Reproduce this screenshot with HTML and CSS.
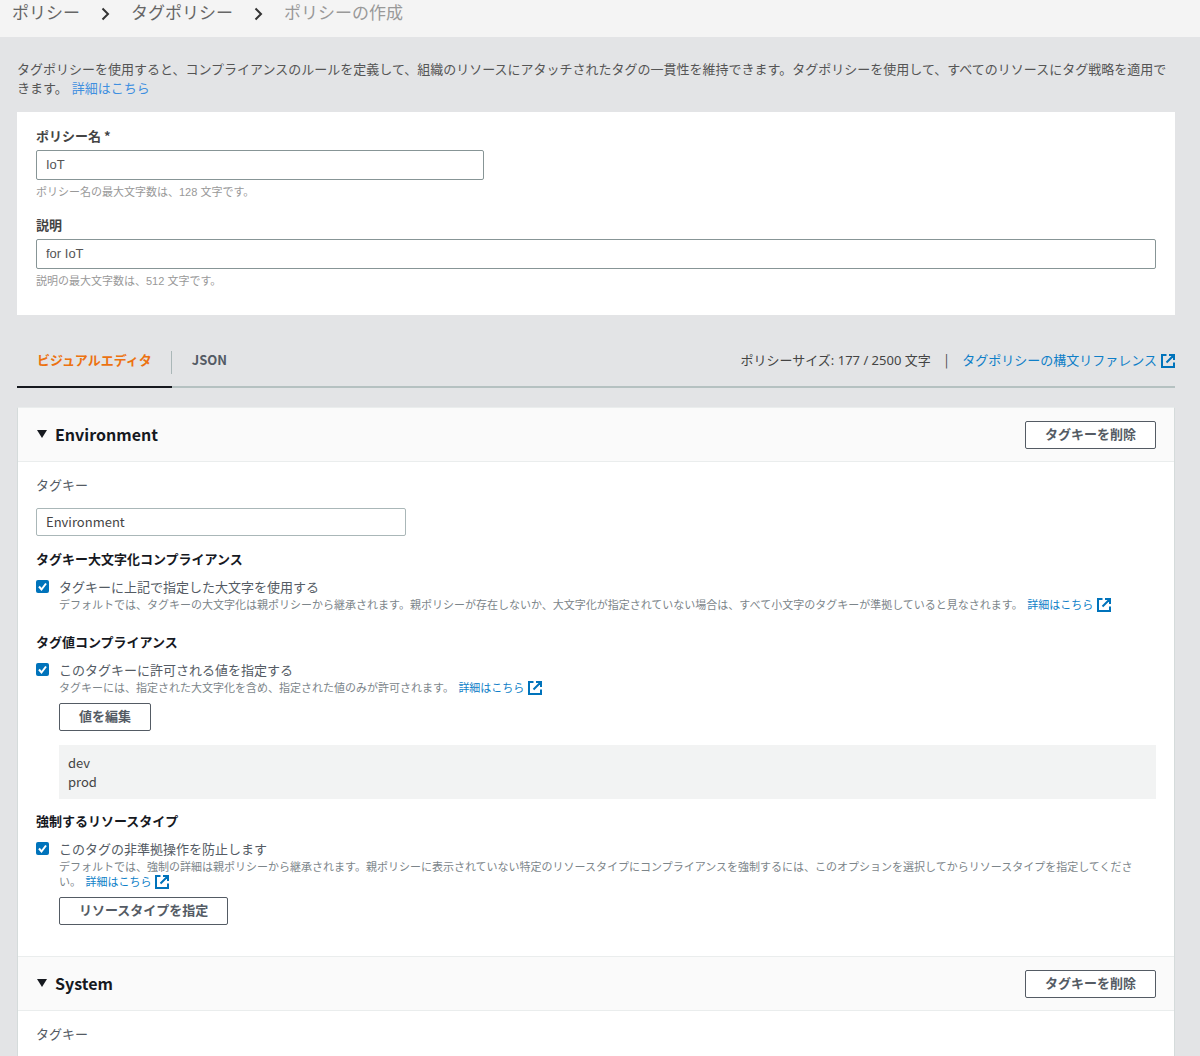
FILE: index.html
```html
<!DOCTYPE html>
<html lang="ja">
<head>
<meta charset="utf-8">
<meta name="viewport" content="width=device-width, initial-scale=1">
<title>ポリシーの作成</title>
<link rel="stylesheet" href="styles.css">
</head>
<body>
<svg class="sprite" aria-hidden="true">
  <symbol id="external" viewBox="0 0 14 14">
    <path d="M5.5 1H1v12h12V8.500M8 1h5v5M13 1 5.500 8.500" fill="none" stroke="currentColor" stroke-width="2"/>
  </symbol>
  <symbol id="chevron" viewBox="0 0 9 14">
    <path d="M1.500 1.500 7 7l-5.500 5.500" fill="none" stroke="currentColor" stroke-width="2"/>
  </symbol>
  <symbol id="caret" viewBox="0 0 10 8">
    <path d="M0 0h10L5 8z" fill="currentColor"/>
  </symbol>
</svg>

<nav class="breadcrumb" aria-label="パンくずリスト">
  <a href="#">ポリシー</a>
  <svg class="chevron"><use href="#chevron"/></svg>
  <a href="#">タグポリシー</a>
  <svg class="chevron"><use href="#chevron"/></svg>
  <span class="current">ポリシーの作成</span>
</nav>

<main class="page">
  <p class="intro">タグポリシーを使用すると、コンプライアンスのルールを定義して、組織のリソースにアタッチされたタグの一貫性を維持できます。タグポリシーを使用して、すべてのリソースにタグ戦略を適用できます。 <a href="#">詳細はこちら</a></p>

  <section class="details">
    <div class="field">
      <label for="policy-name">ポリシー名 *</label>
      <input class="name-input" id="policy-name" type="text" value="IoT">
      <p class="hint">ポリシー名の最大文字数は、128 文字です。</p>
    </div>
    <div class="field">
      <label for="policy-desc">説明</label>
      <input id="policy-desc" type="text" value="for IoT">
      <p class="hint">説明の最大文字数は、512 文字です。</p>
    </div>
  </section>

  <div class="tabbar">
    <div class="tabs" role="tablist">
      <button class="tab active" type="button" role="tab" aria-selected="true">ビジュアルエディタ</button>
      <button class="tab" type="button" role="tab" aria-selected="false">JSON</button>
    </div>
    <div class="size">
      <span class="count">ポリシーサイズ: 177 / 2500 文字</span>
      <span>|</span>
      <a class="ext" href="#">タグポリシーの構文リファレンス<svg class="icon"><use href="#external"/></svg></a>
    </div>
  </div>

  <div class="editor">
    <section>
      <header class="key-header">
        <h2><button class="toggle" type="button" aria-expanded="true"><svg class="caret"><use href="#caret"/></svg>Environment</button></h2>
        <button class="button" type="button">タグキーを削除</button>
      </header>
      <div class="key-body">
        <label class="key-label" for="key-env">タグキー</label>
        <input class="key-input" id="key-env" type="text" value="Environment">

        <h3>タグキー大文字化コンプライアンス</h3>
        <div class="option">
          <input type="checkbox" id="opt-case" checked>
          <label for="opt-case">タグキーに上記で指定した大文字を使用する</label>
          <div class="option-body">
            <p class="note">デフォルトでは、タグキーの大文字化は親ポリシーから継承されます。親ポリシーが存在しないか、大文字化が指定されていない場合は、すべて小文字のタグキーが準拠していると見なされます。 <a class="ext" href="#">詳細はこちら<svg class="icon"><use href="#external"/></svg></a></p>
          </div>
        </div>

        <h3>タグ値コンプライアンス</h3>
        <div class="option">
          <input type="checkbox" id="opt-values" checked>
          <label for="opt-values">このタグキーに許可される値を指定する</label>
          <div class="option-body">
            <p class="note">タグキーには、指定された大文字化を含め、指定された値のみが許可されます。 <a class="ext" href="#">詳細はこちら<svg class="icon"><use href="#external"/></svg></a></p>
            <button class="button" type="button">値を編集</button>
            <ul class="values">
              <li>dev</li>
              <li>prod</li>
            </ul>
          </div>
        </div>

        <h3>強制するリソースタイプ</h3>
        <div class="option">
          <input type="checkbox" id="opt-enforce" checked>
          <label for="opt-enforce">このタグの非準拠操作を防止します</label>
          <div class="option-body">
            <p class="note">デフォルトでは、強制の詳細は親ポリシーから継承されます。親ポリシーに表示されていない特定のリソースタイプにコンプライアンスを強制するには、このオプションを選択してからリソースタイプを指定してください。 <a class="ext" href="#">詳細はこちら<svg class="icon"><use href="#external"/></svg></a></p>
            <button class="button" type="button">リソースタイプを指定</button>
          </div>
        </div>
      </div>
    </section>

    <section>
      <header class="key-header">
        <h2><button class="toggle" type="button" aria-expanded="true"><svg class="caret"><use href="#caret"/></svg>System</button></h2>
        <button class="button" type="button">タグキーを削除</button>
      </header>
      <div class="key-body">
        <p>タグキー</p>
      </div>
    </section>
  </div>
</main>
</body>
</html>
```
FILE: styles.css
```css
* {
  box-sizing: border-box;
}

body {
  display: flex;
  flex-direction: column;
  min-height: 100vh;
  margin: 0;
  background: #e3e4e6;
  color: #545b64;
  font: 13px/19px "Noto Sans CJK JP", sans-serif;
}

p, h2, h3, ul {
  margin: 0;
  padding: 0;
}

a {
  color: #0f7fc8;
  text-decoration: none;
}

button, input {
  font: inherit;
  color: inherit;
}

.sprite {
  display: none;
}

.breadcrumb {
  display: flex;
  align-items: center;
  gap: 21px;
  padding: 0 12px 14px;
  background: #f4f4f4;
  font-size: 17px;
  line-height: 23px;
}

.breadcrumb a {
  color: #666;
}

.breadcrumb .current {
  color: #999;
}

.chevron {
  width: 9px;
  height: 14px;
  margin-top: 5px;
  color: #333;
}

.page {
  display: flex;
  flex: 1;
  flex-direction: column;
  padding: 22px 25px 0 17px;
}

.intro {
  color: #555;
}

.intro a {
  margin-left: 1px;
  color: #3f8fe0;
}

.details {
  display: grid;
  gap: 15px;
  margin-top: 15px;
  padding: 14px 19px 26px;
  background: #fff;
  color: #444;
}

.field {
  display: grid;
}

.field label {
  margin-bottom: 5px;
  font-weight: 700;
}

.field input {
  width: 100%;
  height: 30px;
  padding: 0 9px 2px;
  border: 1px solid #879596;
  border-radius: 2px;
  background: #fff;
  color: #555;
  font-family: "Liberation Sans", sans-serif;
}

.field .name-input {
  width: 40%;
}

.hint {
  margin-top: 4px;
  color: #999;
  font: 11px/16px "Liberation Sans", "Noto Sans CJK JP", sans-serif;
}

.tabbar {
  display: flex;
  justify-content: space-between;
  align-items: stretch;
  margin-top: 19px;
  border-bottom: 2px solid #b5c1c1;
}

.tabs {
  display: flex;
}

.tab {
  display: flex;
  align-items: center;
  height: 54px;
  margin-bottom: -2px;
  padding: 0 20px 2px;
  border: 0;
  border-bottom: 2px solid transparent;
  background: none;
  font-weight: 700;
}

.tab.active {
  border-bottom-color: #16191f;
  color: #ec7211;
  background: linear-gradient(#aab7b8, #aab7b8) right 17px / 1px 23px no-repeat;
}

.size {
  display: flex;
  align-items: baseline;
  gap: 14px;
  padding-top: 16px;
  color: #444;
}

.count {
  font-family: "Noto Sans", "Noto Sans CJK JP", sans-serif;
}

.icon {
  width: 14px;
  height: 14px;
  margin-left: 4px;
  color: #0073bb;
  vertical-align: -3px;
}

.editor {
  flex: 1;
  margin-top: 19px;
  border: 1px solid #d5dbdb;
  border-top-color: #eaeded;
  border-bottom: 0;
  background: #fff;
}

.key-header {
  display: flex;
  justify-content: space-between;
  align-items: center;
  height: 54px;
  padding: 0 18px;
  border-bottom: 1px solid #eaeded;
  background: #fafafa;
}

section + section .key-header {
  height: 55px;
  border-top: 1px solid #eaeded;
}

h2 {
  font-size: 16px;
  line-height: 24px;
}

.toggle {
  display: flex;
  align-items: center;
  gap: 8px;
  padding: 0 0 2px 1px;
  border: 0;
  background: none;
  color: #16191f;
}

.caret {
  width: 10px;
  height: 8px;
}

.button {
  height: 28px;
  padding: 0 19px 3px;
  border: 1px solid #545b64;
  border-radius: 2px;
  background: #fff;
  font-weight: 700;
  line-height: 19px;
}

.key-body {
  padding: 13px 18px 31px;
}

section:last-child .key-body {
  padding-bottom: 0;
}

.key-label {
  display: block;
  margin-bottom: 14px;
}

.key-input {
  display: block;
  width: 33%;
  height: 28px;
  padding: 0 9px 1px;
  border: 1px solid #aab7b8;
  border-radius: 2px;
  background: #fff;
  color: #444;
}

h3 {
  margin: 13px 0 9px;
  color: #16191f;
  font-size: 13px;
}

.option {
  display: grid;
  grid-template-columns: 13px 1fr;
  gap: 1px 10px;
  align-items: center;
}

.option + h3 {
  margin-top: 20px;
}

.option input {
  appearance: none;
  width: 13px;
  height: 13px;
  margin: 0;
  border-radius: 2px;
  background: #0073bb url("data:image/svg+xml,%3Csvg xmlns='http://www.w3.org/2000/svg' viewBox='0 0 13 13'%3E%3Cpath d='M3 6.500l2.500 3L10 3.500' fill='none' stroke='white' stroke-width='2'/%3E%3C/svg%3E");
}

.option-body {
  grid-column: 2;
}

.note {
  padding-right: 8px;
  color: #7c858a;
  font-size: 11px;
  line-height: 15px;
}

.note a {
  margin-left: 2px;
}

.note .icon {
  margin-top: -2px;
}

.option-body .button {
  margin-top: 8px;
}

.values {
  margin: 14px 0 -8px;
  padding: 8px 9px;
  background: #f2f3f3;
  color: #444;
  list-style: none;
}
```
